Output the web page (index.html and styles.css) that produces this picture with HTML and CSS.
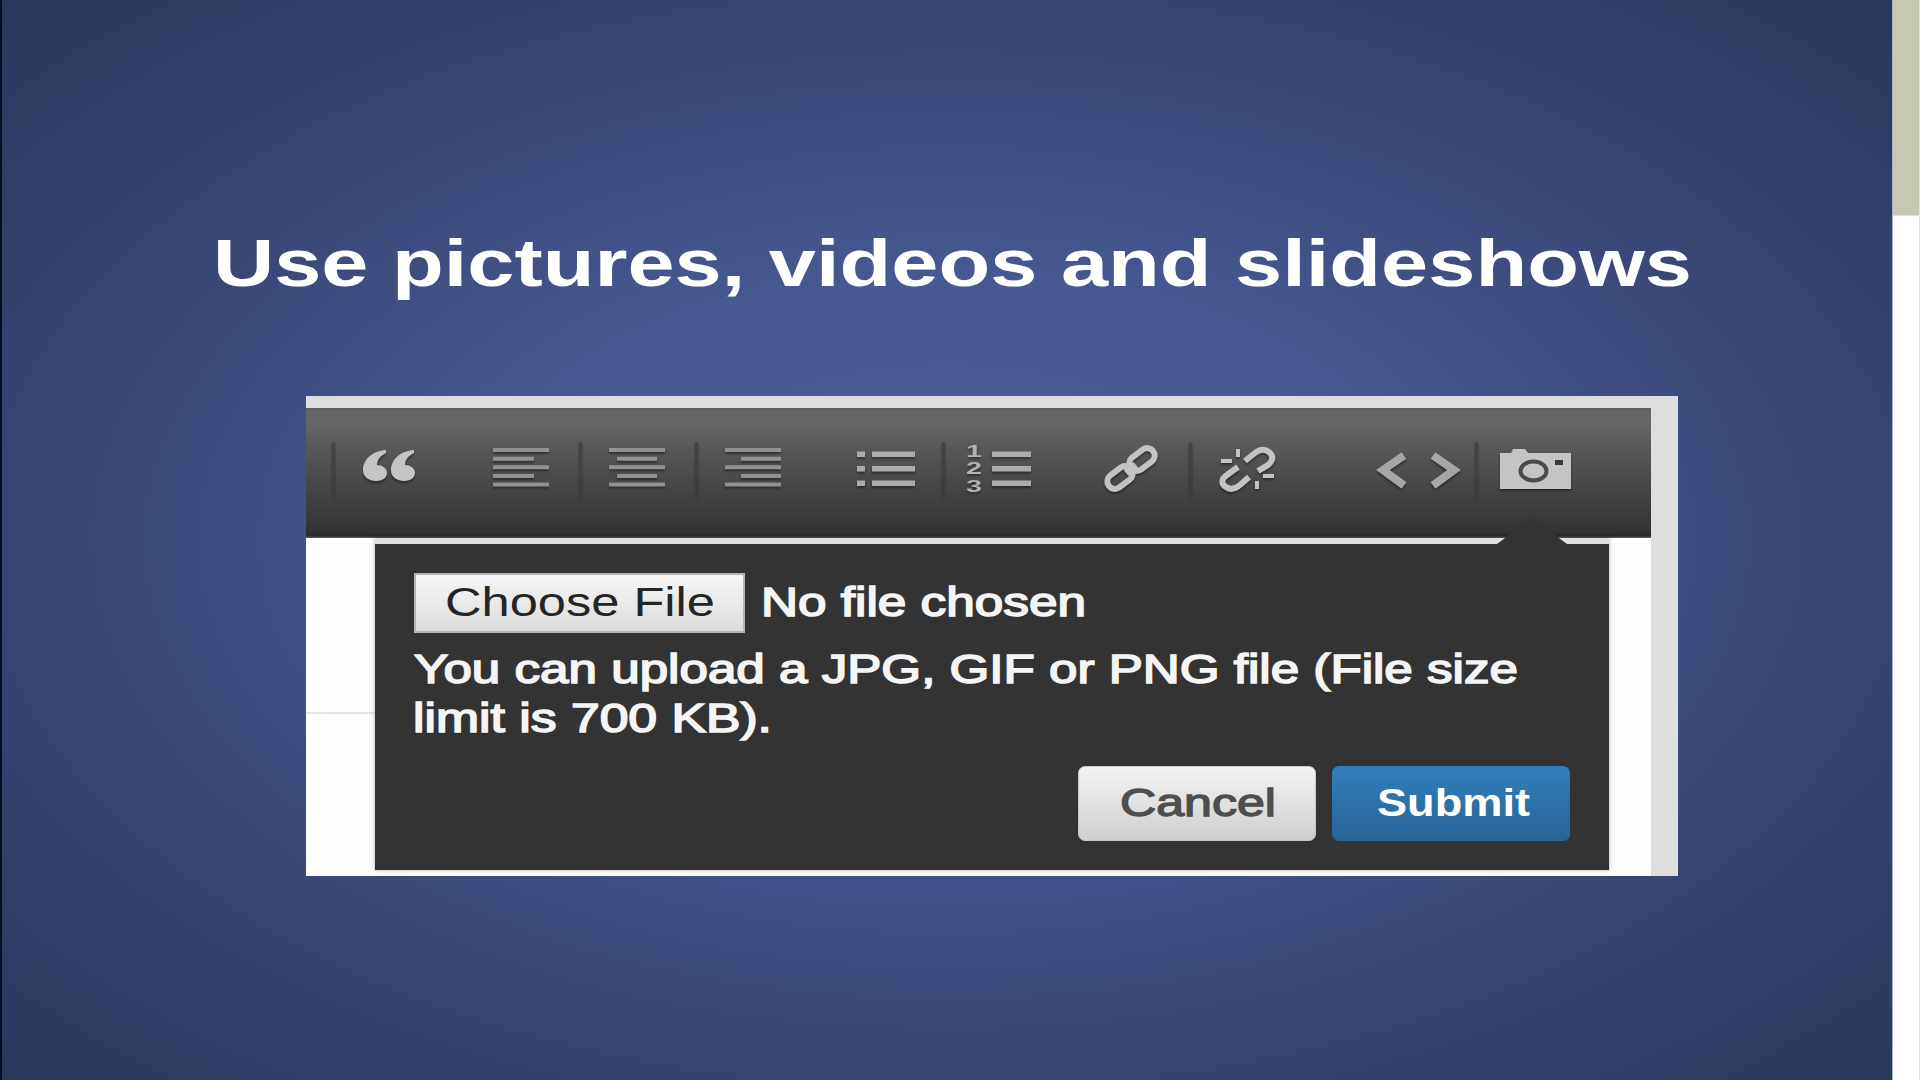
FILE: index.html
```html
<!DOCTYPE html>
<html lang="en">
<head>
<meta charset="utf-8">
<title>Use pictures, videos and slideshows</title>
<link rel="stylesheet" href="styles.css">
</head>
<body>
<main class="slide">
  <h1 class="title"><svg width="1480" height="70"><text x="-4" y="52" textLength="1479" lengthAdjust="spacingAndGlyphs">Use pictures, videos and slideshows</text></svg></h1>
  <section class="shot">
    <div class="editor">
      <div class="toolbar">
        <span class="tool lead"></span>
        <svg class="tool sep" width="131" height="130" viewBox="332 408 131 130"><g fill="#c5c3c4"><path d="M386 450C373 451 363 459 363 470C363 477 369 481 376 481C382 481 387 478 387 473C387 468 382 465 377 465C377 460 380 456 386 453Z"/><path d="M414 450C401 451 391 459 391 470C391 477 397 481 404 481C410 481 415 478 415 473C415 468 410 465 405 465C405 460 408 456 414 453Z"/></g></svg>
        <svg class="tool" width="116" height="130" viewBox="463 408 116 130"><path class="rows" d="M493 450h56M493 458.700h41M493 467.300h56M493 476h41M493 484.500h56"/></svg>
        <svg class="tool sep" width="116" height="130" viewBox="579 408 116 130"><path class="rows" d="M609 450h56M617 458.700h40M609 467.300h56M617 476h40M609 484.500h56"/></svg>
        <svg class="tool sep" width="131" height="130" viewBox="695 408 131 130"><path class="rows" d="M725 450h56M741 458.700h40M725 467.300h56M741 476h40M725 484.500h56"/></svg>
        <svg class="tool" width="116" height="130" viewBox="826 408 116 130"><path class="list" d="M857 454.300h8M872 454.300h43M857 468.800h8M872 468.800h43M857 483.300h8M872 483.300h43"/></svg>
        <svg class="tool sep" width="131" height="130" viewBox="942 408 131 130"><path class="list" d="M992 454.300h39M992 468.800h39M992 483.300h39"/><g class="digits"><text x="966" y="457" textLength="16" lengthAdjust="spacingAndGlyphs">1</text><text x="966" y="474" textLength="16" lengthAdjust="spacingAndGlyphs">2</text><text x="966" y="492" textLength="16" lengthAdjust="spacingAndGlyphs">3</text></g></svg>
        <svg class="tool" width="116" height="130" viewBox="1073 408 116 130"><g class="link"><rect x="-14" y="-7.500" width="28" height="15" rx="7.500" transform="translate(1142 459.500) rotate(-37)"/><rect x="-14" y="-7.500" width="28" height="15" rx="7.500" transform="translate(1120 477.500) rotate(-37)"/><path d="M1126 473l10-8" stroke-width="8"/></g></svg>
        <svg class="tool sep" width="155" height="130" viewBox="1188 408 155 130"><g class="link"><path d="M1244 461L1254 453C1259 449 1264 449 1268 452C1273 456 1272 461 1267 465L1257 471"/><path d="M1237 467L1226 475C1220 479 1220 484 1225 487C1229 490 1234 489 1239 485L1248 477"/><path d="M1237 449v8M1220 461h11M1262 476h11M1256 481v8" stroke-width="4"/></g></svg>
        <svg class="tool" width="131" height="130" viewBox="1343 408 131 130"><path class="code" d="M1403 455.500L1382 470L1403 485.500M1432 455.500L1453 470L1432 485.500"/></svg>
        <svg class="tool sep" width="176" height="130" viewBox="1475 408 176 130"><path fill="#c5c4c3" d="M1500 453H1511L1513 449H1525L1528 453H1571V489H1500Z"/><ellipse cx="1533.500" cy="471" rx="13" ry="9.500" fill="#c5c4c3" stroke="#4a4a4a" stroke-width="4"/><rect x="1555" y="460" width="8" height="5" fill="#3d3d3d"/></svg>
      </div>
      <div class="page">
        <div class="dialog">
          <svg class="arrow" width="70" height="26" viewBox="0 0 70 26"><path d="M35 0L70 26H0Z"/></svg>
          <div class="file">
            <span class="choose"><svg width="270" height="50"><text x="-1" y="37" textLength="270" lengthAdjust="spacingAndGlyphs">Choose File</text></svg></span>
            <svg class="light" width="326" height="50"><text x="-1" y="37" textLength="325" lengthAdjust="spacingAndGlyphs">No file chosen</text></svg>
          </div>
          <p class="light hint">
            <svg width="1105" height="49"><text x="0" y="38" textLength="1104" lengthAdjust="spacingAndGlyphs">You can upload a JPG, GIF or PNG file (File size</text></svg>
            <svg width="360" height="49"><text x="-1" y="38" textLength="359" lengthAdjust="spacingAndGlyphs">limit is 700 KB).</text></svg>
          </p>
          <div class="actions">
            <span class="btn cancel"><svg width="156" height="50"><text x="-1" y="37" textLength="156" lengthAdjust="spacingAndGlyphs">Cancel</text></svg></span>
            <span class="btn submit"><svg width="152" height="50"><text x="-1" y="38" textLength="153" lengthAdjust="spacingAndGlyphs">Submit</text></svg></span>
          </div>
        </div>
      </div>
    </div>
  </section>
</main>
<aside class="side"><div class="tab"></div></aside>
</body>
</html>
```
FILE: styles.css
```css
* { box-sizing: border-box; }
body { margin: 0; width: 1920px; height: 1080px; display: flex; overflow: hidden; background: #fff; font-family: "Liberation Sans", Arial, sans-serif; }
svg { display: block; overflow: visible; flex: none; }
.slide { width: 1892px; height: 1080px; padding: 234px 0 0 304px; border-left: 2px solid #050b20; background: radial-gradient(ellipse at 50% 50%, #4b5b9a 0%, #475893 34%, #415086 48%, #3b4777 64%, #323f6a 80%, #2a385d 100%); }
.side { width: 28px; border-left: 1px solid #a9b1c8; border-right: 1px solid #e2e2e2; }
.tab { height: 216px; background: #c5c9b2; border-bottom: 1px solid #dfe1d6; }
.title { margin: 0 0 92px -89px; font-size: 67px; line-height: 1; height: 70px; fill: #fff; }
.shot { width: 1372px; height: 480px; padding: 12px 27px 0 0; background: #dddedd; }
.editor { width: 1345px; height: 468px; background: #fefefe; }
.toolbar { display: flex; height: 130px; background: linear-gradient(#5c5c5c 0, #666 3px, #636363 20px, #5a5a5a 35px, #505050 58px, #424242 90px, #323232 124px, #292929 128px, #666 130px); }
.lead { width: 27px; }
.sep { background: linear-gradient(#454545, #424242 60%, rgba(64, 64, 64, 0)) no-repeat 0 34px / 3px 58px; }
.tool { filter: drop-shadow(0 2px 1px rgba(20, 20, 20, .55)); }
.rows { stroke: #919191; stroke-width: 4; }
.list { stroke: #ababab; stroke-width: 5.5; }
.digits { fill: #b2b2b2; font-size: 16px; font-weight: 700; }
.link { fill: none; stroke: #c4c2c2; stroke-width: 6; }
.code { fill: none; stroke: #a6a6a6; stroke-width: 8; }
.page { height: 338px; padding: 0 42px 0 69px; background: linear-gradient(#e5e5e5, #e5e5e5) no-repeat 0 174px / 69px 2px; }
.dialog { position: relative; height: 332px; padding: 29px 39px 0; border-top: 6px solid #dedede; background: #333 padding-box; box-shadow: 0 0 4px rgba(0, 0, 0, .35); }
.arrow { position: absolute; top: -26px; right: 42px; fill: #333; }
.file { display: flex; gap: 17px; height: 60px; }
.choose { width: 331px; height: 60px; padding: 4px 0 0 30px; border: 2px solid #b4b4b4; background: linear-gradient(#f6f6f6, #dcdcdc); font-size: 41px; fill: #252525; }
.light { font-size: 41px; fill: #f5f5f5; stroke: #f5f5f5; stroke-width: 1.6px; }
.file .light { margin-top: 6px; }
.hint { margin: 12px 0 0; height: 98px; }
.actions { display: flex; justify-content: flex-end; gap: 16px; margin-top: 23px; }
.btn { width: 238px; height: 75px; padding-top: 12px; border-radius: 7px; font-size: 38px; }
.cancel { padding-left: 42px; background: linear-gradient(#f3f3f3, #cfcfcf); border: 1px solid #c8c8c8; fill: #4e4e4e; stroke: #4e4e4e; stroke-width: 1.3px; }
.submit { padding-left: 46px; background: linear-gradient(#3080bd, #286396); font-weight: 700; fill: #fff; }
```
